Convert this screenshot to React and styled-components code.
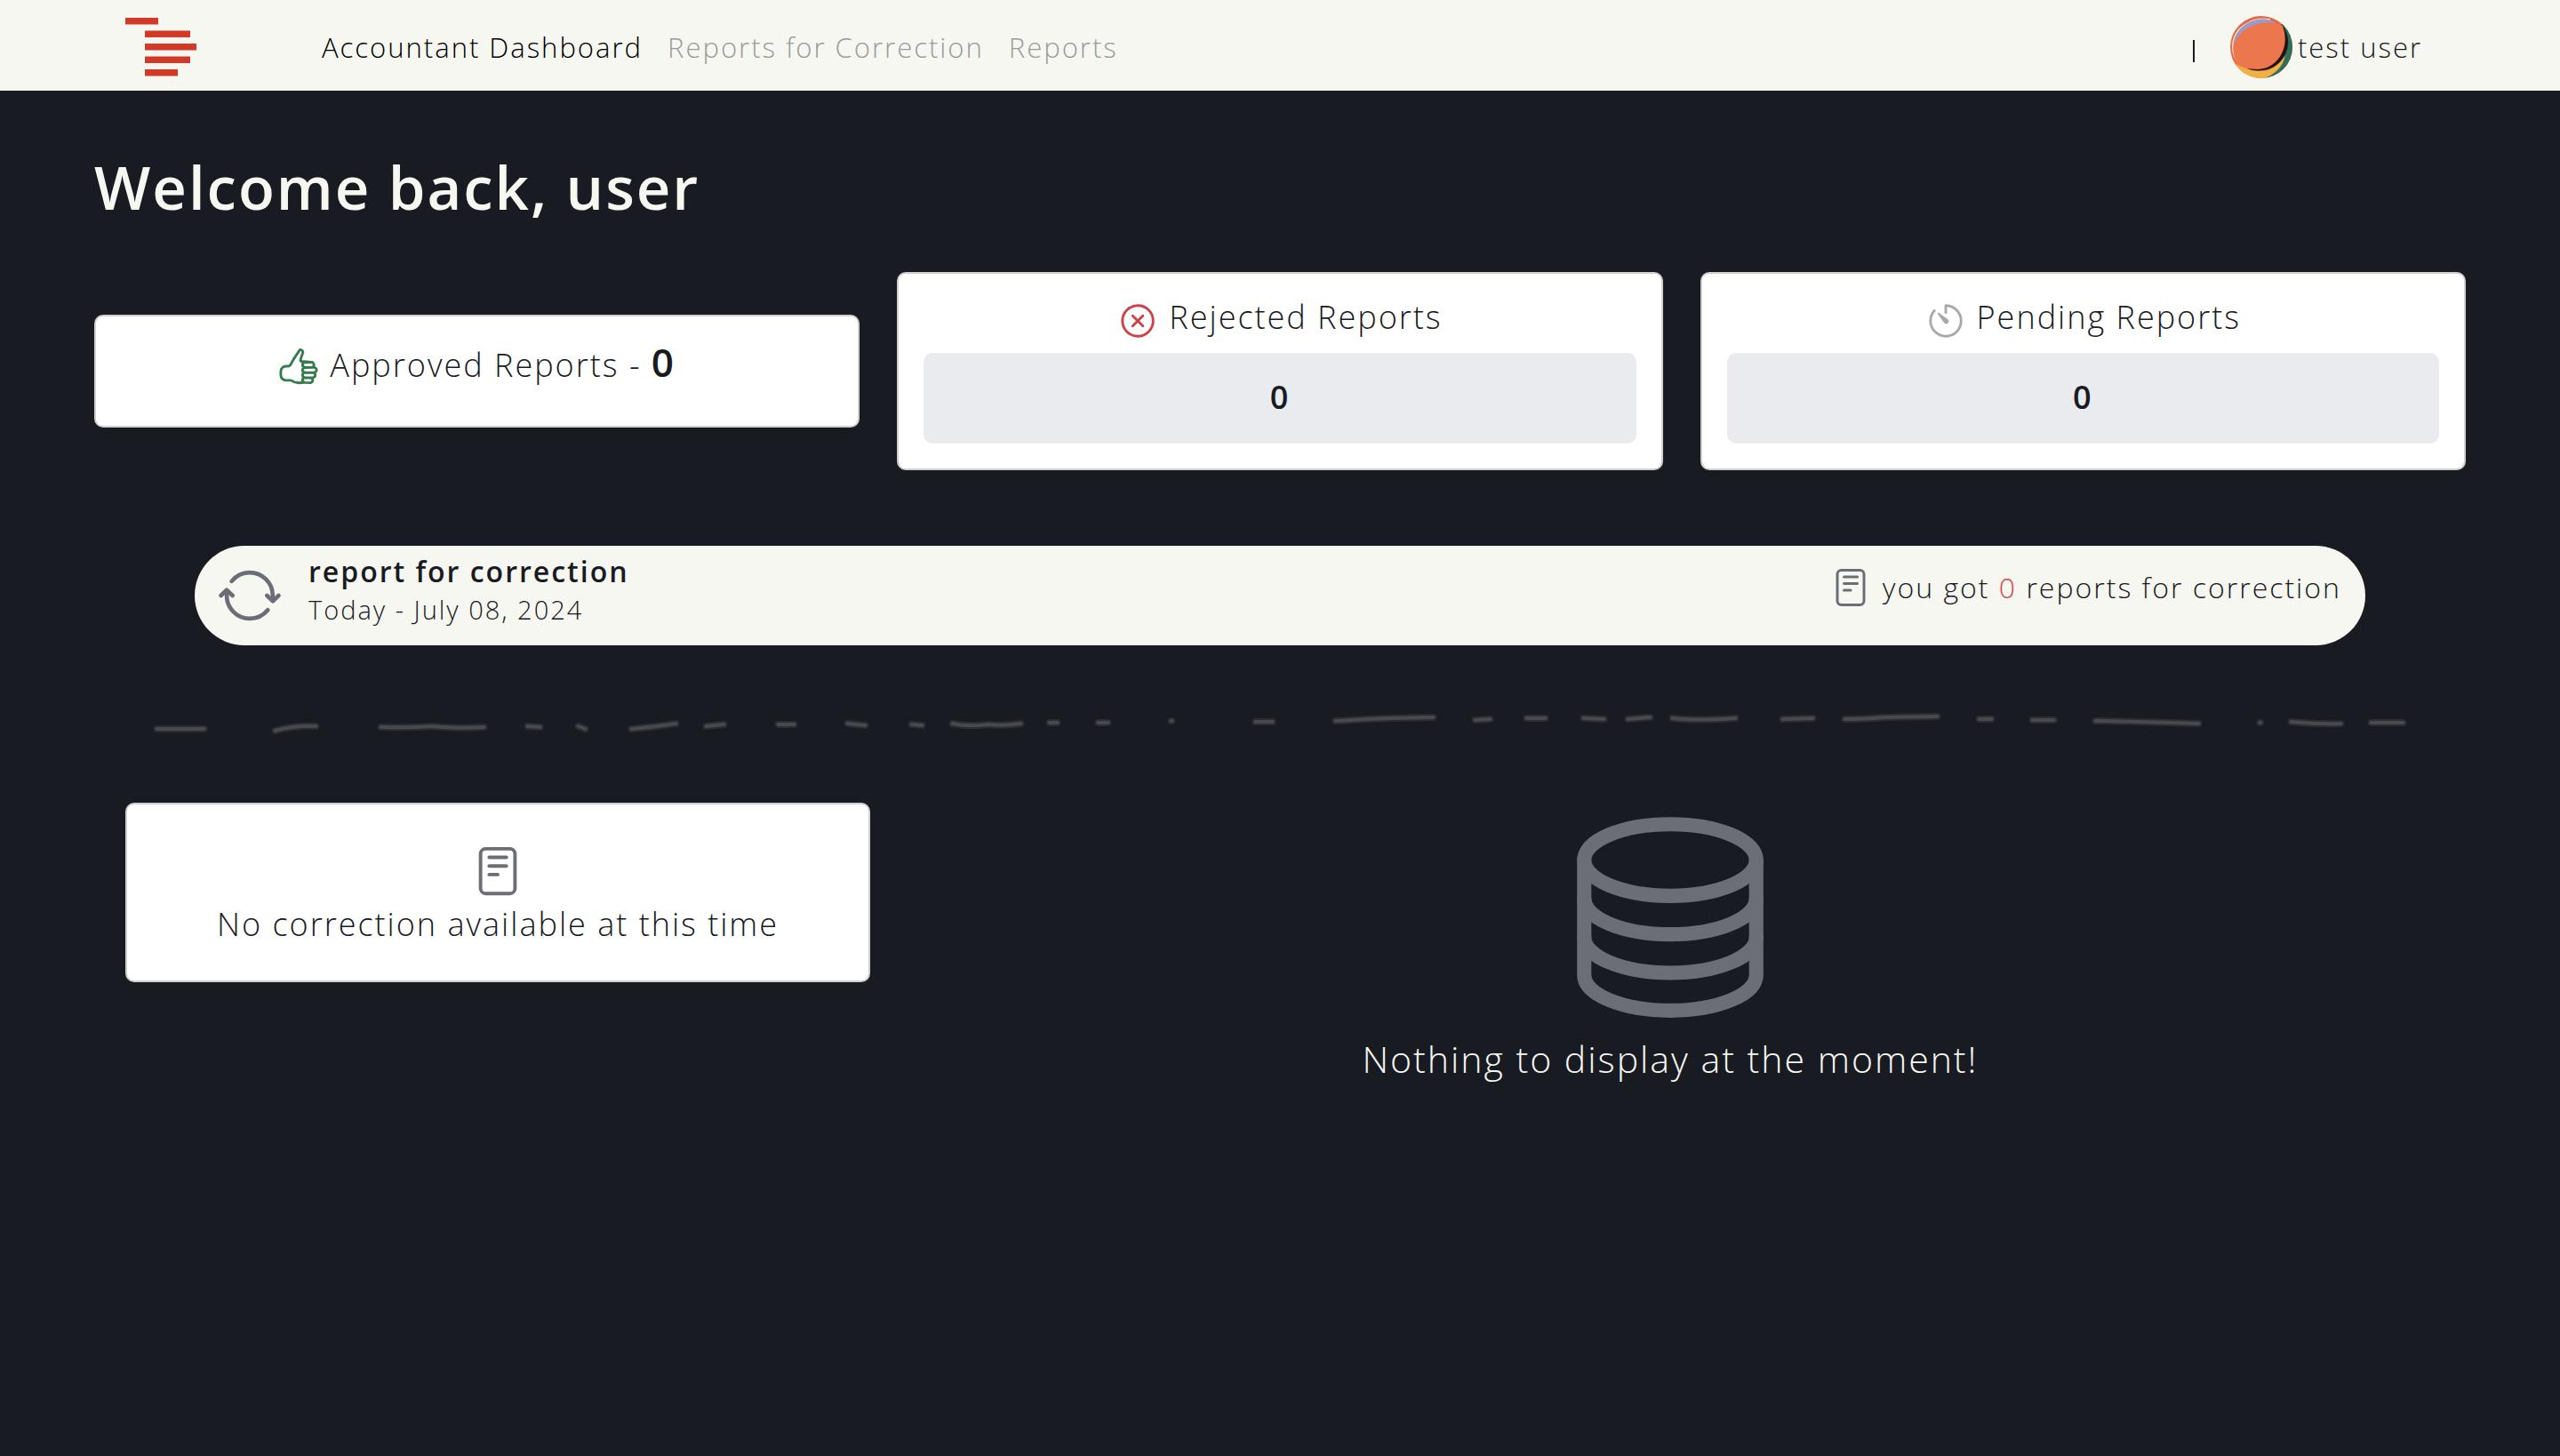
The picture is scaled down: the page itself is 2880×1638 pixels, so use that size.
import React from "react";
import styled, { createGlobalStyle } from "styled-components";
import {
  IoCloseCircleOutline,
  IoReaderOutline,
  IoServerOutline,
  IoSyncOutline,
  IoThumbsUpOutline,
  IoTimerOutline,
} from "react-icons/io5";

const color = {
  ink: "#191b23",
  paper: "#f7f7f2",
  muted: "#9b9b99",
  slate: "#6b6e76",
  tile: "#eaebef",
  border: "#cfcfcf",
  green: "#347c4b",
  red: "#cf4148",
  silver: "#a7a8ac",
};

const GlobalStyle = createGlobalStyle`
  * { box-sizing: border-box; }
  body {
    margin: 0;
    background: ${color.ink};
    color: ${color.ink};
    font-family: "Open Sans", "Liberation Sans", sans-serif;
    font-size: 32px;
    font-weight: 350;
    letter-spacing: 2px;
  }
  h1, h2, p { margin: 0; }
  svg { display: block; flex-shrink: 0; }
`;

const Header = styled.header`
  display: flex;
  align-items: center;
  height: 102px;
  padding: 4px 155px 0 141px;
  background: ${color.paper};
  font-size: 31px;
  line-height: 48px;
`;

const Brand = styled.a`
  margin-right: 141px;
`;

const Nav = styled.nav`
  display: flex;
  flex: 1;
  gap: 28px;
`;

const NavLink = styled.a`
  color: ${(p) => (p.$active ? "#000" : color.muted)};
  text-decoration: none;
`;

const Account = styled.div`
  display: flex;
  align-items: center;
`;

const Separator = styled.span`
  width: 2px;
  height: 25px;
  margin: 8px 40px 0 0;
  background: ${color.ink};
`;

const AccountLink = styled.a`
  display: flex;
  align-items: center;
  gap: 6px;
  color: ${color.ink};
  text-decoration: none;
`;

const Main = styled.main`
  padding: 67px 106px;
`;

const Welcome = styled.h1`
  color: ${color.paper};
  font-size: 67px;
  font-weight: 600;
  line-height: 82px;
`;

const Stats = styled.section`
  display: grid;
  grid-template-columns: repeat(3, 1fr);
  align-items: center;
  gap: 42px;
  margin-top: 55px;
`;

const Card = styled.div`
  padding: 28px;
  background: #fff;
  border: 2px solid ${color.border};
  border-radius: 10px;
`;

const CardTitle = styled.h2`
  display: flex;
  align-items: center;
  justify-content: center;
  gap: 12px;
  margin-bottom: 20px;
  font-size: 36px;
  font-weight: 350;
  line-height: 41px;

  svg {
    margin: 1px 0 -7px;
  }
`;

const TitleCount = styled.strong`
  font-size: 44px;
  font-weight: 600;
  line-height: 46px;
`;

const CountTile = styled.p`
  padding: 27px 28px 29px;
  background: ${color.tile};
  border-radius: 10px;
  font-size: 36px;
  font-weight: 600;
  line-height: 46px;
  text-align: center;
`;

const Pill = styled.section`
  display: flex;
  align-items: center;
  min-height: 112px;
  margin: 85px 113px 0;
  padding: 4px 27px 4px 25px;
  background: ${color.paper};
  border-radius: 56px;
`;

const PillText = styled.div`
  flex: 1;
  align-self: flex-start;
  margin: 3px 0 0 29px;
  line-height: 43px;
`;

const PillTitle = styled.h2`
  font-size: 32px;
  font-weight: 600;
`;

const PillDate = styled.p`
  font-size: 29px;
`;

const PillNote = styled.p`
  display: flex;
  align-items: center;
  align-self: flex-start;
  gap: 12px;
  line-height: 86px;
`;

const Alert = styled.span`
  color: #e0444c;
`;

const Divider = styled.svg`
  width: calc(100% - 134px);
  height: auto;
  margin: 78px 67px 79px;
  overflow: visible;
`;

const Lower = styled.section`
  display: grid;
  grid-template-columns: 19fr 39fr;
  align-items: start;
  gap: 40px;
  padding: 0 35px;
`;

const NoticeCard = styled(Card)`
  display: flex;
  flex-direction: column;
  align-items: center;
  padding: 44px 28px 34px;
  font-size: 36px;
  line-height: 58px;
`;

const Empty = styled.div`
  display: flex;
  flex-direction: column;
  align-items: center;
  color: ${color.paper};
  font-size: 41px;
  line-height: 60px;
`;

const Logo = () => (
  <svg width="80" height="66" viewBox="0 0 80 66" fill="#d23a27" aria-hidden="true">
    <rect x="0" y="0" width="37" height="7.5" />
    <rect x="22" y="14.5" width="51" height="7.5" />
    <rect x="22" y="29" width="58" height="7.5" />
    <rect x="22" y="43.5" width="51" height="7.5" />
    <rect x="22" y="58" width="37" height="7.5" />
  </svg>
);

const Avatar = () => (
  <svg width="70" height="70" viewBox="0 0 70 70" aria-hidden="true">
    <clipPath id="avatar-disc">
      <circle cx="35" cy="35" r="35" />
    </clipPath>
    <g clipPath="url(#avatar-disc)">
      <rect width="70" height="70" fill="#e5683f" />
      <path d="M58 9L72 9V72H36Q56 62 60 45Q66 25 58 9Z" fill="#2f6f58" />
      <path d="M4 53Q30 66 45 60Q56 54 62 44Q58 63 38 70L0 72Z" fill="#efb244" />
      <path d="M7 51Q-3 31 10 15Q25 0 45 4" fill="none" stroke="#f8e6df" strokeWidth="1.4" />
      <path d="M4 32Q6 15 21 7Q38-1 52 8Q34 12 18 22Z" fill="#979bd0" />
      <path d="M58 9Q70 26 62 43Q53 61 32 61.5Q24 61.5 19 59L50 30Z" fill="#24130f" />
      <path d="M4 33Q8 20 20 13Q35 5 51 8L59 11Q65 28 58 42Q50 58 32 60Q18 60 8 55Q2 44 4 33Z" fill="#ec774d" />
    </g>
  </svg>
);

const strokes = [
  "M177 820L230 820",
  "M310 822Q332 816 356 817",
  "M429 818Q460 819 486 817Q516 820 545 818",
  "M594 817L608 818",
  "M651 817L659 820",
  "M711 820Q736 818 761 814",
  "M795 817L815 815",
  "M876 815L894 815",
  "M954 814L974 816",
  "M1026 815L1038 816",
  "M1072 814Q1090 818 1112 815Q1130 817 1149 814",
  "M1181 813L1190 813",
  "M1236 813L1247 813",
  "M1318 811L1319 811",
  "M1413 812L1432 812",
  "M1503 811Q1550 808 1613 807",
  "M1660 810L1677 809",
  "M1718 808L1739 808",
  "M1782 808L1805 809",
  "M1832 809L1857 807",
  "M1882 808Q1910 811 1953 808",
  "M2006 809L2040 808",
  "M2076 809Q2100 809 2120 807L2180 806",
  "M2227 809L2241 809",
  "M2287 810L2311 810",
  "M2358 811Q2410 812 2474 814",
  "M2543 813L2543.5 813",
  "M2578 812Q2610 815 2634 814",
  "M2668 813L2704 813",
];

const DashedDivider = () => (
  <Divider viewBox="174 804 2533 20" fill="none" stroke="#48494d" strokeLinecap="round" aria-hidden="true">
    {strokes.map((d) => (
      <g key={d}>
        <path d={d} strokeWidth="8" opacity="0.4" />
        <path d={d} strokeWidth="4" />
      </g>
    ))}
  </Divider>
);

export default function App() {
  return (
    <>
      <GlobalStyle />
      <Header>
        <Brand href="#" aria-label="Home">
          <Logo />
        </Brand>
        <Nav>
          <NavLink href="#" $active>Accountant Dashboard</NavLink>
          <NavLink href="#">Reports for Correction</NavLink>
          <NavLink href="#">Reports</NavLink>
        </Nav>
        <Account>
          <Separator />
          <AccountLink href="#">
            <Avatar />
            test user
          </AccountLink>
        </Account>
      </Header>
      <Main>
        <Welcome>Welcome back, user</Welcome>
        <Stats>
          <Card>
            <CardTitle>
              <IoThumbsUpOutline size={46} color={color.green} />
              <span>Approved Reports - <TitleCount>0</TitleCount></span>
            </CardTitle>
          </Card>
          <Card>
            <CardTitle>
              <IoCloseCircleOutline size={46} color={color.red} />
              Rejected Reports
            </CardTitle>
            <CountTile>0</CountTile>
          </Card>
          <Card>
            <CardTitle>
              <IoTimerOutline size={46} color={color.silver} />
              Pending Reports
            </CardTitle>
            <CountTile>0</CountTile>
          </Card>
        </Stats>
        <Pill>
          <IoSyncOutline size={74} color={color.slate} />
          <PillText>
            <PillTitle>report for correction</PillTitle>
            <PillDate>Today - July 08, 2024</PillDate>
          </PillText>
          <PillNote>
            <IoReaderOutline size={48} color={color.slate} />
            <span>you got <Alert>0</Alert> reports for correction</span>
          </PillNote>
        </Pill>
        <DashedDivider />
        <Lower>
          <NoticeCard>
            <IoReaderOutline size={62} color={color.slate} />
            <p>No correction available at this time</p>
          </NoticeCard>
          <Empty>
            <IoServerOutline size={258} color={color.slate} />
            <p>Nothing to display at the moment!</p>
          </Empty>
        </Lower>
      </Main>
    </>
  );
}
